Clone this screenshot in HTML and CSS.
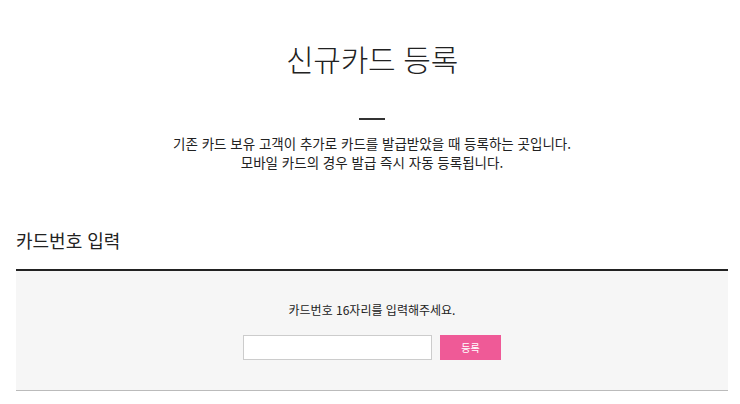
FILE: index.html
```html
<!DOCTYPE html>
<html lang="ko">
<head>
    <meta charset="UTF-8">
    <meta name="viewport" content="width=device-width, initial-scale=1.0">
    <title>신규카드 등록</title>
    <link rel="stylesheet" href="styles.css">
</head>
<body>

    <div class="wrap">
        <div class="page-head">
            <h1>신규카드 등록</h1>
            <span class="dash"></span>
            <p class="desc">기존 카드 보유 고객이 추가로 카드를 발급받았을 때 등록하는 곳입니다.<br>모바일 카드의 경우 발급 즉시 자동 등록됩니다.</p>
        </div>

        <h2 class="section-title">카드번호 입력</h2>

        <div class="card-box">
            <p class="guide">카드번호 16자리를 입력해주세요.</p>
            <div class="form-row">
                <input type="text" class="card-input" maxlength="16">
                <button type="button" class="btn-submit">등록</button>
            </div>
        </div>
    </div>

</body>
</html>
```

FILE: styles.css
```css
body {
    margin: 0;
    font-family: "Noto Sans CJK KR", "Noto Sans", sans-serif;
    color: #333;
    background-color: #fff;
}
.wrap {
    padding: 0 12px 0 16px;
}
.page-head {
    text-align: center;
    padding-top: 36px;
}
h1 {
    margin: 0;
    font-size: 30px;
    font-weight: 300;
    line-height: 44px;
    color: #222;
    letter-spacing: -0.3px;
}
.dash {
    display: block;
    width: 26px;
    height: 2px;
    margin: 38px auto 0;
    background-color: #333;
}
.desc {
    margin: 14px 0 0;
    font-size: 13.5px;
    line-height: 19px;
    color: #222;
}
.section-title {
    margin: 55px 0 0;
    font-size: 18px;
    font-weight: 400;
    line-height: 26px;
    color: #222;
}
.card-box {
    margin-top: 16px;
    border-top: 2px solid #222;
    border-bottom: 1px solid #bbb;
    background-color: #f6f6f6;
    text-align: center;
    padding: 30px 0 30px;
}
.guide {
    margin: 0;
    font-size: 12px;
    line-height: 18px;
    color: #222;
}
.form-row {
    display: flex;
    justify-content: center;
    gap: 8px;
    margin-top: 16px;
}
.card-input {
    width: 189px;
    height: 25px;
    box-sizing: border-box;
    border: 1px solid #ccc;
    background-color: #fff;
    margin: 0;
    padding: 0 6px;
}
.btn-submit {
    width: 61px;
    height: 25px;
    border: none;
    margin: 0;
    background-color: #ef5a97;
    color: #fff;
    font-family: inherit;
    font-size: 10px;
    cursor: pointer;
}
```
